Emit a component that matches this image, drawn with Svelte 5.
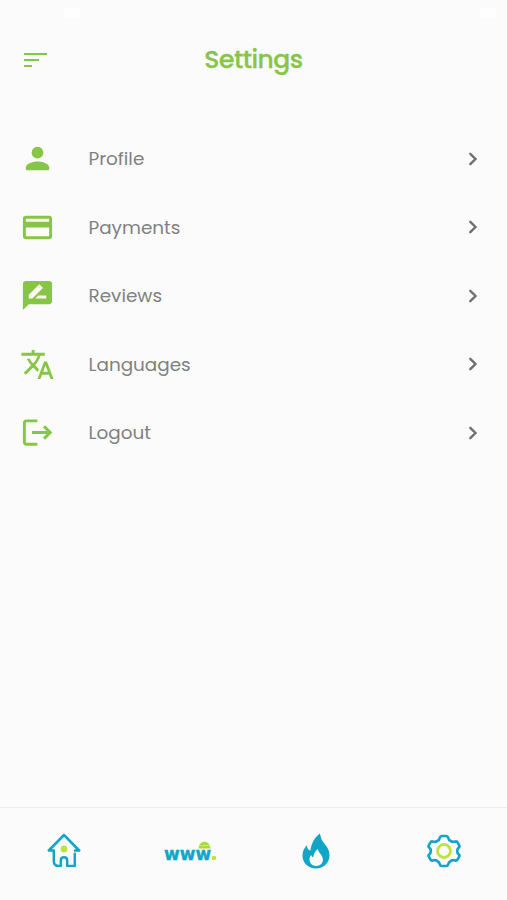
<script>
	const items = [
		{ id: 'profile', label: 'Profile' },
		{ id: 'payments', label: 'Payments' },
		{ id: 'reviews', label: 'Reviews' },
		{ id: 'languages', label: 'Languages' },
		{ id: 'logout', label: 'Logout' }
	];
</script>

<div class="screen">
	<div class="status"><span class="time"></span><span class="battery"></span></div>

	<header>
		<button class="menu" aria-label="Menu">
			<span></span>
			<span></span>
			<span></span>
		</button>
		<h1>Settings</h1>
	</header>

	<main>
		{#each items as item}
			<a class="row" href="#{item.id}">
				<svg class="icon" viewBox="0 0 24 24">
					{#if item.id === 'profile'}
						<circle cx="12" cy="8" r="4" />
						<path d="M12 14c-2.67 0-8 1.34-8 4v1.2c0 .5.3.8.8.8h14.4c.5 0 .8-.3.8-.8V18c0-2.66-5.33-4-8-4z" />
					{:else if item.id === 'payments'}
						<path d="M20 4H4c-1.11 0-1.99.89-1.99 2L2 18c0 1.11.89 2 2 2h16c1.11 0 2-.89 2-2V6c0-1.11-.89-2-2-2zm0 14H4v-6h16v6zm0-10H4V6h16v2z" />
					{:else if item.id === 'reviews'}
						<path d="M20 2H4c-1.1 0-1.99.9-1.99 2L2 22l4-4h14c1.1 0 2-.9 2-2V4c0-1.1-.9-2-2-2zM6 14v-2.47l6.88-6.88c.2-.2.51-.2.71 0l1.77 1.77c.2.2.2.51 0 .71L8.47 14H6zm12 0h-7.5l2-2H18v2z" />
					{:else if item.id === 'languages'}
						<path d="M12.87 15.07l-2.54-2.51.03-.03c1.74-1.94 2.98-4.17 3.71-6.53H17V4h-7V2H8v2H1v1.99h11.17C11.5 7.92 10.44 9.75 9 11.35 8.07 10.32 7.3 9.19 6.69 8h-2c.73 1.63 1.73 3.17 2.98 4.56l-5.09 5.02L4 19l5-5 3.11 3.11.76-2.04zM18.5 10h-2L12 22h2l1.12-3h4.75L21 22h2l-4.5-12zm-2.62 7l1.62-4.33L19.12 17h-3.24z" />
					{:else}
						<path class="line" d="M11.9 4H4.5C3.5 4 3 4.5 3 5.5v13c0 1 .5 1.5 1.5 1.5h7.4M8.2 12h12.5M16.5 7.8l4.2 4.2-4.2 4.2" />
					{/if}
				</svg>
				<span class="label">{item.label}</span>
				<svg class="chevron" viewBox="0 0 10 16">
					<path d="M2.3 2.8l5.2 5.2-5.2 5.2" />
				</svg>
			</a>
		{/each}
	</main>

	<nav>
		<a href="#home" aria-label="Home">
			<svg class="home" viewBox="0 0 36 36">
				<path d="M7 19.5H2.8L18 4l15.2 15.5H29M7.8 19.5V30c0 3.4 1.8 5 5 5h2v-5.5c0-4.3 6.4-4.3 6.4 0V35h7.6V22.8" />
				<circle cx="18" cy="18" r="3.4" />
			</svg>
		</a>
		<a href="#web" aria-label="Web">
			<span class="www">www<i></i>
				<svg class="globe" viewBox="0 0 13 8">
					<path d="M0.5 7.5C1-1.5 12-1.5 12.5 7.5z" />
					<path class="cut" d="M1 4.5h11" />
				</svg>
			</span>
		</a>
		<a href="#trending" aria-label="Trending">
			<svg class="fire" viewBox="0 0 28 36">
				<path d="M18 .5c.7 4.8 2 7 4.5 10.2C25.8 14.7 27.5 17.5 27.5 22 27.5 30 21.7 35.5 14 35.5S.5 30 .5 22.5c0-4.2 1.7-7.5 4.3-10.3.2 3 1.6 4.8 3.5 5.2C9.8 9.8 12.5 4.2 18 .5z" />
				<path class="core" d="M15.8 16c.7 4 5.100 6 5.100 10.800 0 3.700-2.900 6.200-6.600 6.200s-6.800-2.500-6.800-6.400c0-2.100.6-3.400 1.700-4.700.3 1.300.9 2 2 2.300.6-3.800 2.100-6.200 4.600-8.200z" />
			</svg>
		</a>
		<a href="#settings" aria-label="Settings">
			<svg class="gear" viewBox="0 0 34 34">
				<path d="M14.8 2h4.4c1.2 0 1.7.6 1.9 1.5.4 2 1.3 3 2.9 3.8 1.5.8 2.8.8 4.4.2.9-.3 1.6-.1 2.1.8l1.7 3c.5.9.3 1.6-.4 2.2-1.2 1-1.6 2.1-1.6 3.5s.4 2.5 1.6 3.5c.7.6.9 1.3.4 2.2l-1.7 3c-.5.9-1.2 1.1-2.1.8-1.6-.6-2.9-.6-4.4.2-1.6.8-2.5 1.8-2.9 3.8-.2.9-.7 1.5-1.9 1.5h-4.4c-1.2 0-1.7-.6-1.9-1.5-.4-2-1.3-3-2.9-3.8-1.5-.8-2.8-.8-4.4-.2-.9.3-1.6.1-2.1-.8l-1.7-3c-.5-.9-.3-1.6.4-2.2 1.2-1 1.6-2.1 1.6-3.5s-.4-2.5-1.6-3.5c-.7-.6-.9-1.3-.4-2.2l1.7-3c.5-.9 1.2-1.1 2.1-.8 1.6.6 2.9.6 4.4-.2 1.6-.8 2.5-1.8 2.9-3.8.2-.9.7-1.5 1.9-1.5z" />
				<circle cx="17" cy="17" r="6.5" />
			</svg>
		</a>
	</nav>
</div>

<style>
	:global(body) {
		margin: 0;
	}

	.screen {
		--green: #86c546;
		--lime: #bfe33b;
		--blue: #12a5c8;
		display: flex;
		flex-direction: column;
		width: 507px;
		height: 900px;
		background-color: #fbfbfb;
		font-family: Poppins, Inter, 'Liberation Sans', sans-serif;
	}

	a {
		text-decoration: none;
	}

	.status {
		display: flex;
		justify-content: space-between;
		box-sizing: border-box;
		height: 26px;
		padding: 8px 11px 0 64px;
	}

	.time,
	.battery {
		width: 16px;
		height: 10px;
		border-radius: 4px;
		background-color: #fefefe;
	}

	header {
		display: grid;
		grid-template-columns: 80px 1fr 80px;
		align-items: center;
		height: 67px;
	}

	.menu {
		display: flex;
		flex-direction: column;
		gap: 4px;
		margin-left: 24px;
		padding: 0;
		border: 0;
		background: none;
	}

	.menu span {
		width: 22.5px;
		height: 2px;
		background-color: var(--green);
	}

	.menu span:nth-child(2) {
		width: 15px;
	}

	.menu span:nth-child(3) {
		width: 8px;
	}

	h1 {
		margin: 0;
		color: var(--green);
		font-size: 25px;
		font-weight: 500;
		letter-spacing: -0.5px;
		text-align: center;
		-webkit-text-stroke: 0.3px var(--green);
	}

	main {
		flex: 1;
		padding-top: 31.8px;
	}

	.row {
		display: flex;
		align-items: center;
		height: 68.4px;
		padding: 0 29px 0 20px;
	}

	.icon {
		width: 35px;
		height: 35px;
		fill: var(--green);
	}

	.line {
		fill: none;
		stroke: var(--green);
		stroke-width: 2;
	}

	.label {
		flex: 1;
		margin-left: 33.5px;
		color: #808080;
		font-size: 18.4px;
	}

	.chevron {
		width: 10px;
		height: 16px;
		fill: none;
		stroke: #707070;
		stroke-width: 2.4;
		stroke-linecap: round;
	}

	nav {
		display: grid;
		grid-template-columns: repeat(4, 1fr);
		box-sizing: border-box;
		height: 93px;
		padding-bottom: 6px;
		border-top: 1px solid #eee;
	}

	nav a {
		display: flex;
		align-items: center;
		justify-content: center;
	}

	.home {
		width: 36px;
		height: 36px;
		margin-left: 2px;
		margin-bottom: 4px;
		fill: none;
		stroke: var(--blue);
		stroke-width: 2.5;
		stroke-linejoin: round;
		stroke-linecap: round;
	}

	.home circle {
		fill: var(--lime);
		stroke: none;
	}

	.www {
		position: relative;
		margin-top: 5px;
		color: var(--blue);
		font-family: 'DejaVu Sans', sans-serif;
		font-size: 17px;
		font-weight: bold;
		-webkit-text-stroke: 0.4px var(--blue);
	}

	.www i {
		display: inline-block;
		width: 4px;
		height: 4px;
		margin-left: 1px;
		border-radius: 1px;
		background-color: var(--lime);
	}

	.globe {
		position: absolute;
		top: -3px;
		right: 5px;
		width: 13px;
		height: 8px;
		fill: #a8dc38;
	}

	.cut {
		stroke: #d8efa0;
		stroke-width: 0.7;
	}

	.fire {
		width: 28px;
		height: 36px;
		margin-right: 1px;
		fill: var(--blue);
	}

	.core {
		fill: #fbfbfb;
	}

	.gear {
		width: 34px;
		height: 34px;
		margin-bottom: 1px;
		fill: none;
		stroke: var(--blue);
		stroke-width: 2.7;
	}

	.gear circle {
		stroke: var(--lime);
		stroke-width: 2.8;
	}
</style>
